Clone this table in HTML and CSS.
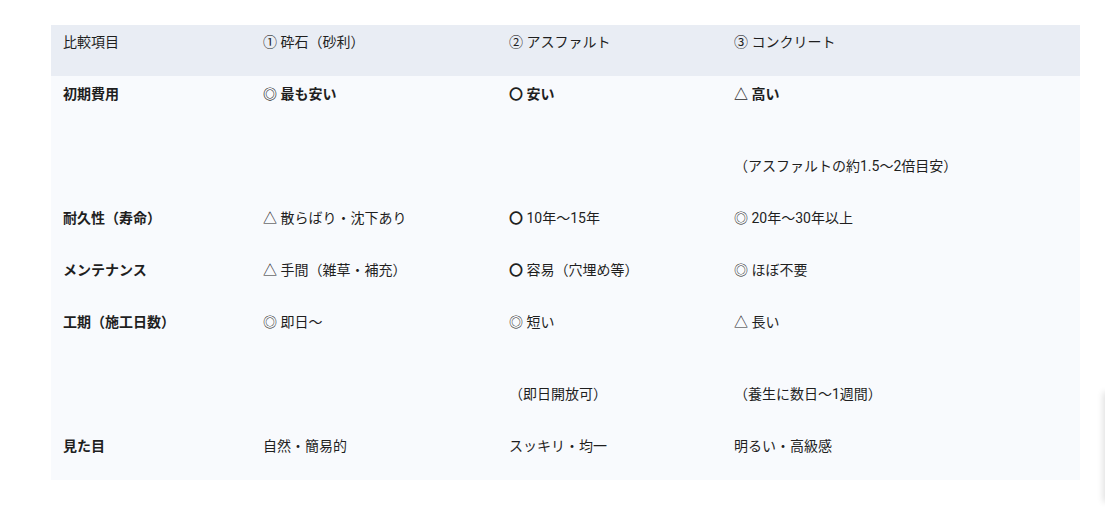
FILE: index.html
```html
<!DOCTYPE html>
<html lang="ja">
<head>
<meta charset="utf-8">
<title>比較表</title>
<link rel="stylesheet" href="styles.css">
</head>
<body>
<div class="wrap">
  <table class="cmp">
    <thead>
      <tr>
        <th class="c1">比較項目</th>
        <th class="c2">① 砕石（砂利）</th>
        <th class="c3">② アスファルト</th>
        <th class="c4">③ コンクリート</th>
      </tr>
    </thead>
    <tbody>
      <tr>
        <td class="key">初期費用</td>
        <td><b>◎ 最も安い</b></td>
        <td><b><span class="ring">〇</span> 安い</b></td>
        <td><b>△ 高い</b><div class="note">（アスファルトの約1.5〜2倍目安）</div></td>
      </tr>
      <tr>
        <td class="key">耐久性（寿命）</td>
        <td>△ 散らばり・沈下あり</td>
        <td><span class="ring">〇</span> 10年〜15年</td>
        <td>◎ 20年〜30年以上</td>
      </tr>
      <tr>
        <td class="key">メンテナンス</td>
        <td>△ 手間（雑草・補充）</td>
        <td><span class="ring">〇</span> 容易（穴埋め等）</td>
        <td>◎ ほぼ不要</td>
      </tr>
      <tr>
        <td class="key">工期（施工日数）</td>
        <td>◎ 即日〜</td>
        <td>◎ 短い<div class="note">（即日開放可）</div></td>
        <td>△ 長い<div class="note">（養生に数日〜1週間）</div></td>
      </tr>
      <tr>
        <td class="key">見た目</td>
        <td>自然・簡易的</td>
        <td>スッキリ・均一</td>
        <td>明るい・高級感</td>
      </tr>
    </tbody>
  </table>
</div>
<div class="edge-shadow"></div>
</body>
</html>
```

FILE: styles.css
```css
html, body {
  margin: 0;
  padding: 0;
  background: #ffffff;
}

body {
  font-family: Roboto, "Noto Sans CJK JP", sans-serif;
  font-size: 14px;
  color: #1f1f1f;
}

.wrap {
  padding: 25px 25px 0 51px;
}

.cmp {
  border-collapse: collapse;
  table-layout: fixed;
  width: 1029px;
}

.cmp th,
.cmp td {
  box-sizing: border-box;
  text-align: left;
  vertical-align: top;
  line-height: 24px;
  padding: 6px 12px 22px 12px;
}

.cmp thead th {
  background: #e9edf4;
  font-weight: 400;
  padding-top: 5px;
  padding-bottom: 22px;
}

.cmp tbody td {
  background: #f8fafd;
}

.c1 { width: 200px; }
.c2 { width: 246px; }
.c3 { width: 225px; }
.c4 { width: 358px; }

.key {
  font-weight: 700;
}

.cmp b {
  font-weight: 700;
}

.ring {
  font-weight: 700;
}

.note {
  margin-top: 48px;
  font-weight: 400;
}

.edge-shadow {
  position: fixed;
  right: -8px;
  top: 392px;
  width: 8px;
  height: 110px;
  box-shadow: -2px 0 6px rgba(0, 0, 0, 0.12);
  background: #fff;
}
```
